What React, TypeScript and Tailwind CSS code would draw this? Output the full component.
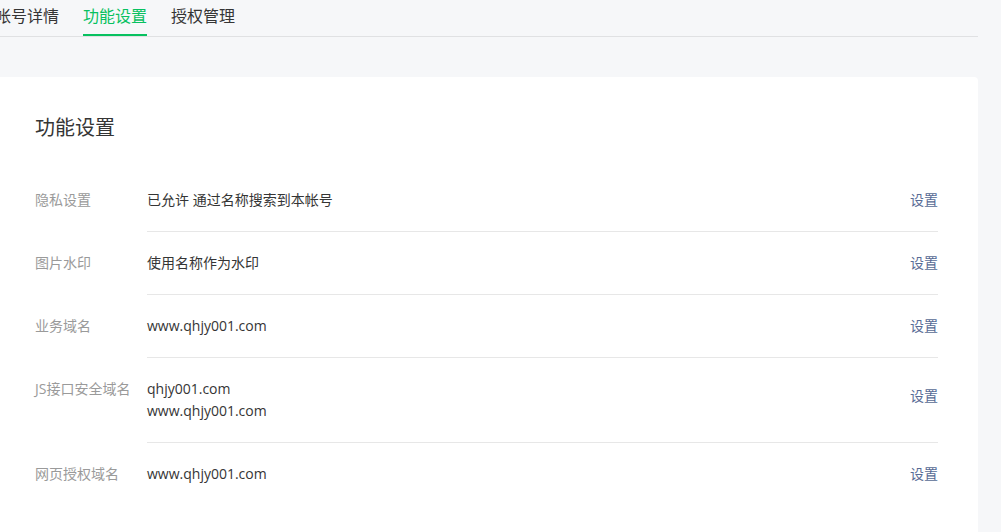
const rows: { label: string; values: string[] }[] = [
  { label: '隐私设置', values: ['已允许 通过名称搜索到本帐号'] },
  { label: '图片水印', values: ['使用名称作为水印'] },
  { label: '业务域名', values: ['www.qhjy001.com'] },
  { label: 'JS接口安全域名', values: ['qhjy001.com', 'www.qhjy001.com'] },
  { label: '网页授权域名', values: ['www.qhjy001.com'] },
]

const tabs = ['帐号详情', '功能设置', '授权管理']

export default function App() {
  return (
    <div
      className="min-h-[532px] w-[1001px] overflow-hidden bg-[#f6f7f9]"
      style={{ fontFamily: '"Open Sans", "Noto Sans CJK SC", sans-serif' }}
    >
      <div className="-ml-[5px] w-[983px]">
        {/* tabs */}
        <div className="flex gap-6 border-b border-[#e0e1e3]">
          {tabs.map((t, i) => (
            <div
              key={t}
              className={
                i === 1
                  ? 'border-b-2 border-[#07c160] pt-[5px] pb-[7px] text-[16px] leading-[22px] text-[#07c160]'
                  : 'border-b-2 border-transparent pt-[5px] pb-[7px] text-[16px] leading-[22px] text-[#353535]'
              }
            >
              {t}
            </div>
          ))}
        </div>

        {/* card */}
        <div className="mt-10 rounded-[4px] bg-white px-10 pt-10 pb-8">
          <h2 className="text-[20px] leading-[22px] font-normal text-[#353535]">功能设置</h2>
          <div className="mt-[30px]">
            {rows.map((r, i) => {
              const multi = r.values.length > 1
              return (
                <div key={r.label} className="flex">
                  <div className="w-[112px] shrink-0 py-5 text-[14px] leading-[22px] text-[#9a9a9a]">{r.label}</div>
                  <div
                    className={
                      (multi ? 'items-start ' : 'items-center ') +
                      (i < rows.length - 1
                        ? 'flex flex-1 justify-between border-b border-[#e7e7e7] py-5'
                        : 'flex flex-1 justify-between py-5')
                    }
                  >
                    <div className="text-[14px] leading-[22px] text-[#353535]">
                      {r.values.map((v) => (
                        <div key={v}>{v}</div>
                      ))}
                    </div>
                    <a
                      className={
                        multi
                          ? 'mt-[7px] cursor-pointer text-[14px] leading-[22px] text-[#576b95]'
                          : 'cursor-pointer text-[14px] leading-[22px] text-[#576b95]'
                      }
                    >
                      设置
                    </a>
                  </div>
                </div>
              )
            })}
          </div>
        </div>
      </div>
    </div>
  )
}
